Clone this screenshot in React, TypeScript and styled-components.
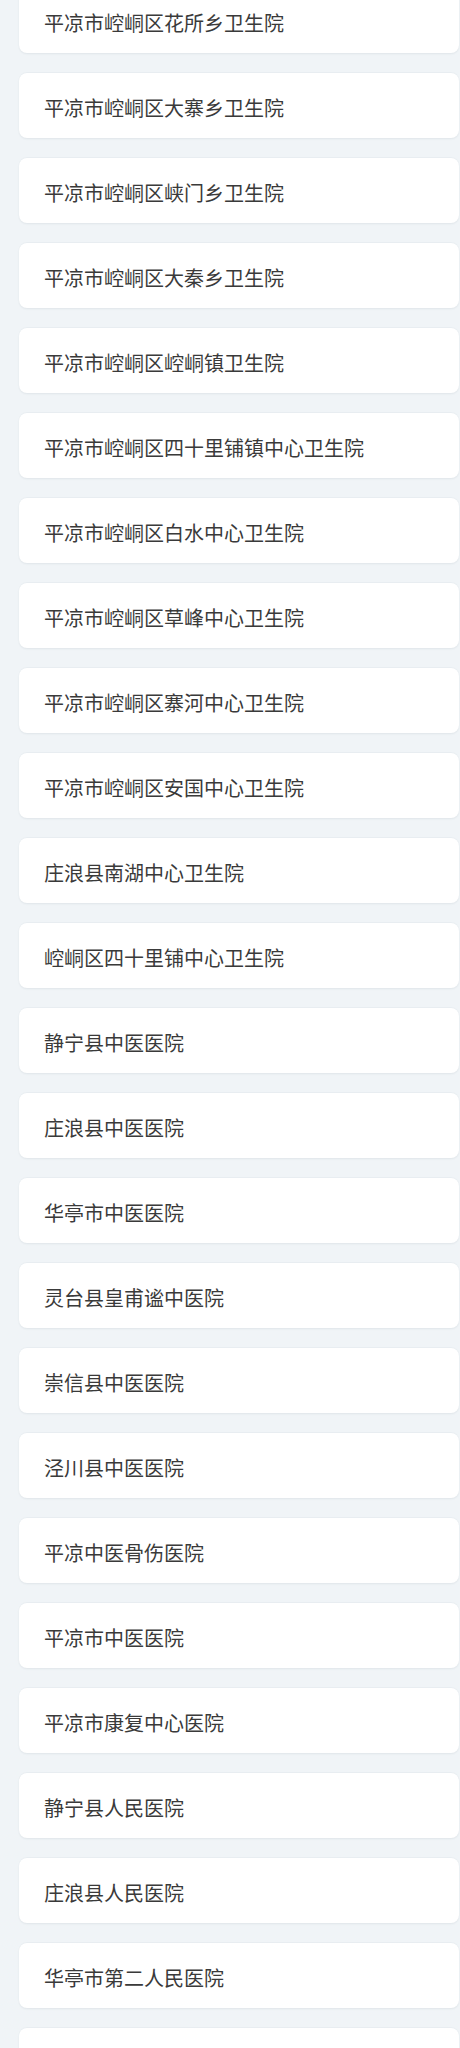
import * as React from 'react';
import styled, { createGlobalStyle } from 'styled-components';

const hospitals: string[] = [
  '平凉市崆峒区花所乡卫生院',
  '平凉市崆峒区大寨乡卫生院',
  '平凉市崆峒区峡门乡卫生院',
  '平凉市崆峒区大秦乡卫生院',
  '平凉市崆峒区崆峒镇卫生院',
  '平凉市崆峒区四十里铺镇中心卫生院',
  '平凉市崆峒区白水中心卫生院',
  '平凉市崆峒区草峰中心卫生院',
  '平凉市崆峒区寨河中心卫生院',
  '平凉市崆峒区安国中心卫生院',
  '庄浪县南湖中心卫生院',
  '崆峒区四十里铺中心卫生院',
  '静宁县中医医院',
  '庄浪县中医医院',
  '华亭市中医医院',
  '灵台县皇甫谧中医院',
  '崇信县中医医院',
  '泾川县中医医院',
  '平凉中医骨伤医院',
  '平凉市中医医院',
  '平凉市康复中心医院',
  '静宁县人民医院',
  '庄浪县人民医院',
  '华亭市第二人民医院',
  '',
];

const GlobalStyle = createGlobalStyle`
  html, body {
    margin: 0;
    padding: 0;
    background: #f0f4f7;
  }
  body {
    font-family: "Noto Sans CJK SC", "Noto Sans", sans-serif;
    overflow: hidden;
  }
`;

const Page = styled.div`
  height: 2048px;
  overflow: hidden;
  background: #f0f4f7;
`;

const List = styled.ul`
  list-style: none;
  margin: -12px 0 0 0;
  padding: 0 1px 0 19px;
  display: flex;
  flex-direction: column;
  gap: 20px;
`;

const Item = styled.li`
  height: 65px;
  box-sizing: border-box;
  background: #fff;
  border-radius: 8px;
  box-shadow: 0 1px 2px rgba(40, 60, 80, 0.08), 0 -1px 1px rgba(40, 60, 80, 0.03);
  display: flex;
  align-items: center;
  padding: 3px 25px 0;
  font-size: 20px;
  color: #3a3a3a;
  white-space: nowrap;
`;

const App: React.FC = () => (
  <Page>
    <GlobalStyle />
    <List>
      {hospitals.map((name, i) => (
        <Item key={i}>{name}</Item>
      ))}
    </List>
  </Page>
);

export default App;
